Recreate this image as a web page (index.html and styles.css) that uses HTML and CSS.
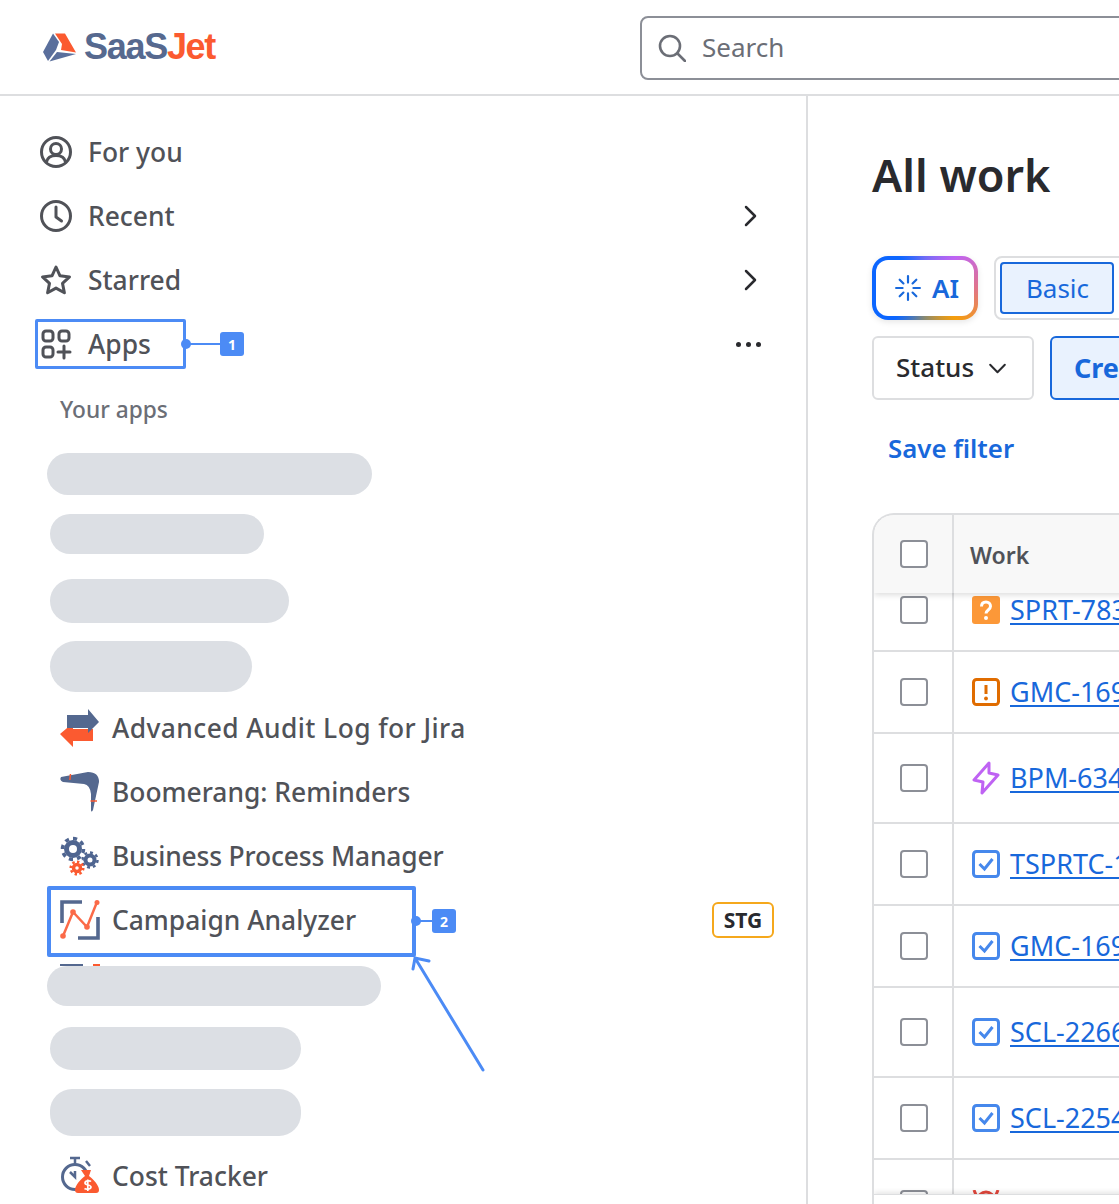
FILE: index.html
```html
<!DOCTYPE html>
<html lang="en">
<head>
<meta charset="utf-8">
<title>All work</title>
<link rel="stylesheet" href="styles.css">
</head>
<body>
<div class="page">
  <header class="topbar">
    <div class="logo">
      <svg class="logo-mark" viewBox="0 0 34 29"><path d="M10 .5 0 19l5 9 8-11 3-8z" fill="#5a6f9c"/><path d="M12 .5h10l11 19-15-2.500 1-6z" fill="#fb5a30"/><path d="M6.500 28.500 14 19l19 2z" fill="#5a6f9c"/></svg>
      <span class="logo-text">Saa<span class="logo-s">S</span><span class="logo-jet">Jet</span></span>
    </div>
    <div class="search">
      <svg class="search-icon" viewBox="0 0 28 28"><circle cx="12" cy="12" r="10" fill="none" stroke="#6b6e76" stroke-width="2.6"/><path d="M19.500 19.500 27 27" stroke="#6b6e76" stroke-width="2.6" stroke-linecap="round"/></svg>
      <span class="search-text">Search</span>
    </div>
  </header>
  <div class="columns">
    <nav class="sidebar">
      <a class="nav-item">
        <svg class="nav-icon" viewBox="0 0 32 32"><circle cx="16" cy="16" r="14.500" class="ln"/><circle cx="16" cy="13" r="5.500" class="ln"/><path d="M6.500 26c1-5 5-6.500 9.500-6.500S24.500 21 25.500 26" class="ln"/></svg>
        <span class="nav-label">For you</span>
      </a>
      <a class="nav-item">
        <svg class="nav-icon" viewBox="0 0 32 32"><circle cx="16" cy="16" r="14.500" class="ln"/><path d="M16 7v10l5.500 4" class="ln"/></svg>
        <span class="nav-label">Recent</span>
        <svg class="chev" viewBox="0 0 14 22"><path d="M2 2l9 9-9 9" class="ln-dark"/></svg>
      </a>
      <a class="nav-item">
        <svg class="nav-icon" viewBox="0 0 32 32"><path d="M16 3l4 8.800 9.500 1.100-7 6.500 1.900 9.400L16 24.100l-8.400 4.700 1.900-9.400-7-6.500 9.500-1.100z" class="ln"/></svg>
        <span class="nav-label">Starred</span>
        <svg class="chev" viewBox="0 0 14 22"><path d="M2 2l9 9-9 9" class="ln-dark"/></svg>
      </a>
      <a class="nav-item">
        <svg class="nav-icon" viewBox="0 0 32 32"><rect x="3" y="3" width="10" height="10" rx="3" class="ln"/><rect x="19" y="3" width="10" height="10" rx="3" class="ln"/><rect x="3" y="19" width="10" height="10" rx="3" class="ln"/><path d="M24 18v12M18 24h12" class="ln"/></svg>
        <span class="nav-label">Apps</span>
        <span class="more"><i></i><i></i><i></i></span>
      </a>
      <div class="section-title">Your apps</div>

      <div class="sk sk1"></div>
      <div class="sk sk2"></div>
      <div class="sk sk3"></div>
      <div class="sk sk4"></div>

      <a class="app-row app-first">
        <svg class="app-icon" viewBox="0 0 40 40"><path d="M0 26 13 15v6h20v12H13v6z" fill="#fb5a30"/><path d="M7 7h21V1l11 13-11 11v-5H7z" fill="#54688f"/></svg>
        <span class="app-label label-wide">Advanced Audit Log for Jira</span>
      </a>
      <a class="app-row">
        <svg class="app-icon" viewBox="0 0 40 40"><path d="M1 5 28 0q11 0 11 10l-6 28q-2 3-2 0V22q-1-9-7-10L3 10Q-1 8 1 5z" fill="#54688f"/><path d="M10.500 2l-.7 6" stroke="#fb5a30" stroke-width="1.500"/><path d="M30.500 29h6.500" stroke="#fb5a30" stroke-width="1.500"/></svg>
        <span class="app-label">Boomerang: Reminders</span>
      </a>
      <a class="app-row">
        <svg class="app-icon" viewBox="0 0 40 40">
          <circle cx="13" cy="13" r="6.500" class="gear" stroke-width="5"/>
          <circle cx="13" cy="13" r="10.500" class="gear teeth" pathLength="16" stroke-width="3.500"/>
          <circle cx="30" cy="24" r="4.500" class="gear" stroke-width="4"/>
          <circle cx="30" cy="24" r="7.500" class="gear teeth" pathLength="16" stroke-width="2.500"/>
          <circle cx="17" cy="32" r="3.500" class="gear-red" stroke-width="3.500"/>
          <circle cx="17" cy="32" r="6.300" class="gear-red teeth" pathLength="16" stroke-width="2.500"/>
        </svg>
        <span class="app-label label-tight">Business Process Manager</span>
      </a>
      <a class="app-row">
        <svg class="app-icon" viewBox="0 0 40 40"><path d="M22 2H2v21" fill="none" stroke="#54688f" stroke-width="3.600"/><path d="M38 17v21H18" fill="none" stroke="#54688f" stroke-width="3.600"/><path d="M3 36 13 12l14 15L37 2" fill="none" stroke="#fb6a48" stroke-width="2.500"/><circle cx="3" cy="36" r="2.800" fill="#fb6a48"/><circle cx="13" cy="12" r="2.800" fill="#fb6a48"/><circle cx="27" cy="27" r="2.800" fill="#fb6a48"/><circle cx="37" cy="2.500" r="2.500" fill="#fb6a48"/></svg>
        <span class="app-label">Campaign Analyzer</span>
        <span class="stg">STG</span>
      </a>
      <div class="peek"><i class="peek-blue"></i><i class="peek-red"></i></div>
      <div class="sk sk5"></div>
      <div class="sk sk6"></div>
      <div class="sk sk7"></div>
      <a class="app-row app-last">
        <svg class="app-icon" viewBox="0 0 40 40"><circle cx="15" cy="21" r="12.500" fill="none" stroke="#54688f" stroke-width="3"/><path d="M10 2h10M15 2v6M26 5l4 5M15 15v6l-5-5" fill="none" stroke="#54688f" stroke-width="2.500"/><path d="M21 14h10l-2 6c4 3 10 9 10 14 0 2-1 3-3 3H18c-2 0-3-1-3-3 0-5 6-11 10-14z" fill="#fb5a30"/><path d="M31 25.500c-1-1-6-1-6 1.500s6 1.500 6 4-5 2.500-6.500 1.500M27.800 23.500v11.500" fill="none" stroke="#fff" stroke-width="1.700"/></svg>
        <span class="app-label">Cost Tracker</span>
      </a>
    </nav>

    <main class="main">
      <h1 class="title">All work</h1>
      <div class="tools">
        <div class="ai-btn">
          <div class="ai-inner">
            <svg class="ai-icon" viewBox="0 0 24 24"><path d="M12 1v6M12 17v6M1 12h6M17 12h6M4.300 4.300l3.500 3.500M16.200 16.200l3.500 3.500M19.700 4.300l-3.500 3.500M7.800 16.200l-3.500 3.500" stroke="#1868db" stroke-width="2" stroke-linecap="round"/></svg>
            <span>AI</span>
          </div>
        </div>
        <div class="mode">
          <div class="mode-btn">Basic</div>
          <div class="mode-off">JQL</div>
        </div>
      </div>
      <div class="tools filter-row">
        <div class="status-btn">
          <span>Status</span>
          <svg class="status-chev" viewBox="0 0 20 12"><path d="M2 2l8 8 8-8" class="ln-dark thin"/></svg>
        </div>
        <div class="created-btn">Created</div>
      </div>
      <a class="save">Save filter</a>

      <section class="table">
        <div class="thead">
          <div class="cell-check"><span class="box"></span></div>
          <div class="th-work">Work</div>
        </div>
        <div class="tbody">
          <div class="tbody-inner">
            <div class="row">
              <div class="cell-check"><span class="box"></span></div>
              <div class="cell-work">
                <svg class="type" viewBox="0 0 28 28"><rect width="28" height="28" rx="3" fill="#fc9838"/><path d="M9.500 10.500c0-3 2-4.500 4.500-4.500s4.500 1.700 4.500 4.300c0 3.700-4.500 3.700-4.500 7.200" fill="none" stroke="#fff" stroke-width="3"/><circle cx="14" cy="22" r="2" fill="#fff"/></svg>
                <a class="key">SPRT-7831</a>
              </div>
            </div>
            <div class="row">
              <div class="cell-check"><span class="box"></span></div>
              <div class="cell-work">
                <svg class="type" viewBox="0 0 28 28"><rect x="1.500" y="1.500" width="25" height="25" rx="3" fill="none" stroke="#e06c00" stroke-width="3"/><path d="M14 7v9" stroke="#e06c00" stroke-width="3"/><circle cx="14" cy="20.500" r="1.900" fill="#e06c00"/></svg>
                <a class="key">GMC-1695</a>
              </div>
            </div>
            <div class="row row-tall">
              <div class="cell-check"><span class="box"></span></div>
              <div class="cell-work">
                <svg class="type tall-icon" viewBox="0 0 28 34"><path d="M17 2 2 19l9 2-1 11 16-18-9-2z" fill="none" stroke="#bf63f3" stroke-width="3" stroke-linejoin="round"/></svg>
                <a class="key">BPM-6342</a>
              </div>
            </div>
            <div class="row">
              <div class="cell-check"><span class="box"></span></div>
              <div class="cell-work">
                <svg class="type" viewBox="0 0 28 28"><rect x="1.500" y="1.500" width="25" height="25" rx="3" fill="none" stroke="#4688ec" stroke-width="3"/><path d="M7.500 14l5 5 8-10" fill="none" stroke="#4688ec" stroke-width="3"/></svg>
                <a class="key">TSPRTC-12</a>
              </div>
            </div>
            <div class="row">
              <div class="cell-check"><span class="box"></span></div>
              <div class="cell-work">
                <svg class="type" viewBox="0 0 28 28"><rect x="1.500" y="1.500" width="25" height="25" rx="3" fill="none" stroke="#4688ec" stroke-width="3"/><path d="M7.500 14l5 5 8-10" fill="none" stroke="#4688ec" stroke-width="3"/></svg>
                <a class="key">GMC-1694</a>
              </div>
            </div>
            <div class="row row-tall">
              <div class="cell-check"><span class="box"></span></div>
              <div class="cell-work">
                <svg class="type" viewBox="0 0 28 28"><rect x="1.500" y="1.500" width="25" height="25" rx="3" fill="none" stroke="#4688ec" stroke-width="3"/><path d="M7.500 14l5 5 8-10" fill="none" stroke="#4688ec" stroke-width="3"/></svg>
                <a class="key">SCL-2266</a>
              </div>
            </div>
            <div class="row">
              <div class="cell-check"><span class="box"></span></div>
              <div class="cell-work">
                <svg class="type" viewBox="0 0 28 28"><rect x="1.500" y="1.500" width="25" height="25" rx="3" fill="none" stroke="#4688ec" stroke-width="3"/><path d="M7.500 14l5 5 8-10" fill="none" stroke="#4688ec" stroke-width="3"/></svg>
                <a class="key">SCL-2254</a>
              </div>
            </div>
            <div class="row row-tall">
              <div class="cell-check"><span class="box"></span></div>
              <div class="cell-work">
                <svg class="type" viewBox="0 0 28 28"><circle cx="14" cy="10" r="8" fill="none" stroke="#e2483d" stroke-width="3"/><path d="M2 0l2 5M26 0l-2 5" stroke="#e2483d" stroke-width="3"/></svg>
                <a class="key">SCL-2250</a>
              </div>
            </div>
          </div>
        </div>
        <div class="tfoot"></div>
      </section>
    </main>
  </div>

  <div class="mark mark-apps"></div>
  <div class="mark mark-campaign"></div>
  <svg class="callouts" viewBox="0 0 1119 1204">
    <circle cx="186" cy="344" r="5" fill="#4c8bf5"/>
    <path d="M186 344h34" stroke="#4c8bf5" stroke-width="2"/>
    <circle cx="416" cy="921" r="5" fill="#4c8bf5"/>
    <path d="M416 921h16" stroke="#4c8bf5" stroke-width="2"/>
    <path d="M483 1070 415 958M413 969l2-11 14 3" fill="none" stroke="#4c8bf5" stroke-width="3" stroke-linecap="round"/>
  </svg>
  <div class="tag tag-1">1</div>
  <div class="tag tag-2">2</div>
</div>
</body>
</html>
```

FILE: styles.css
```css
* { box-sizing: border-box; }
html, body { margin: 0; padding: 0; background: #fff; }
body { font-family: "Noto Sans", "Open Sans", sans-serif; color: #292a2e; }
.page { position: relative; width: 1119px; height: 1204px; overflow: hidden; }
a { text-decoration: none; color: inherit; }
.ln { fill: none; stroke: #505258; stroke-width: 3; stroke-linecap: round; stroke-linejoin: round; }
.ln-dark { fill: none; stroke: #292a2e; stroke-width: 2.5; stroke-linecap: round; stroke-linejoin: round; }
.thin { stroke-width: 2.2; }
.gear { fill: none; stroke: #4f6590; }
.gear-red { fill: none; stroke: #fb5a30; }
.teeth { stroke-dasharray: 1 1; }

.topbar { height: 96px; display: flex; align-items: center; border-bottom: 2px solid #dddee0; padding-left: 43px; padding-top: 2px; }
.logo { display: flex; align-items: center; width: 597px; flex: none; gap: 7px; padding-bottom: 2px; }
.logo-mark { width: 34px; height: 29px; }
.logo-text { font-family: "Liberation Sans", Arial, sans-serif; font-weight: 700; font-size: 36px; letter-spacing: -1.3px; color: #56698f; line-height: 1; }
.logo-s { color: #56698f; }
.logo-jet { color: #fb5a30; }
.search { width: 700px; flex: none; height: 64px; border: 2px solid #8c8f97; border-radius: 8px; display: flex; align-items: center; padding-left: 16px; gap: 16px; font-size: 26px; color: #6b6e76; }
.search-icon { width: 28px; height: 28px; }
.search-text { padding-bottom: 2px; }

.columns { display: flex; height: 1108px; }
.sidebar { width: 808px; flex: none; border-right: 2px solid #dddee0; padding: 24px 0 0 0; overflow: hidden; }
.nav-item { height: 64px; display: flex; align-items: center; padding-left: 40px; color: #505258; font-size: 26.4px; }
.nav-icon { width: 32px; height: 32px; flex: none; }
.nav-label { margin-left: 16px; font-weight: 500; flex: 1; }
.chev { width: 14px; height: 22px; margin-right: 48px; flex: none; }
.more { display: flex; gap: 5px; margin-right: 45px; }
.more i { width: 5px; height: 5px; border-radius: 50%; background: #292a2e; display: block; }
.section-title { margin: 16px 0 0 60px; height: 36px; line-height: 36px; font-size: 22.7px; font-weight: 500; color: #6b6e76; }

.sk { background: #dcdfe4; border-radius: 22px; }
.sk1 { width: 325px; height: 42px; margin: 25px 0 0 47px; }
.sk2 { width: 214px; height: 40px; margin: 19px 0 0 50px; }
.sk3 { width: 239px; height: 44px; margin: 25px 0 0 50px; }
.sk4 { width: 202px; height: 51px; margin: 18px 0 0 50px; border-radius: 26px; }
.sk5 { width: 334px; height: 40px; margin: 0 0 0 47px; }
.sk6 { width: 251px; height: 43px; margin: 21px 0 0 50px; }
.sk7 { width: 251px; height: 47px; margin: 19px 0 0 50px; }

.app-row { height: 64px; display: flex; align-items: center; padding-left: 60px; font-size: 26.4px; color: #505258; }
.app-first { margin-top: 4px; }
.app-last { margin-top: 8px; }
.app-icon { width: 40px; height: 40px; flex: none; overflow: visible; }
.app-label { margin-left: 12px; font-weight: 500; flex: 1; }
.label-wide { letter-spacing: 0.42px; }
.label-tight { letter-spacing: -0.15px; }
.stg { width: 62px; height: 36px; margin-right: 32px; border: 2px solid #f5a81c; border-radius: 6px; font-size: 21px; font-weight: 700; color: #292a2e; display: flex; align-items: center; justify-content: center; }
.peek { height: 2px; margin: 12px 0 0 60px; display: flex; }
.peek-blue { width: 23px; background: #54688f; display: block; }
.peek-red { width: 7px; margin-left: 10px; background: #fb5a30; display: block; }

.main { flex: 1; padding-left: 64px; min-width: 0; overflow: hidden; }
.title { margin: 50px 0 0; height: 60px; line-height: 58px; font-size: 45px; font-weight: 600; color: #292a2e; }
.tools { display: flex; margin-top: 50px; width: 700px; }
.filter-row { margin-top: 16px; }
.ai-btn { width: 106px; height: 64px; padding: 4px; border-radius: 16px; background: conic-gradient(#6f6cf5 0deg, #bf63f3 45deg, #e0748a 90deg, #f59e0b 135deg, #8a8a70 180deg, #0c66ff 225deg, #0c66ff 320deg, #6f6cf5 360deg); box-shadow: 0 2px 6px rgba(0,0,0,.1); }
.ai-inner { height: 100%; background: #fff; border-radius: 12px; display: flex; align-items: center; padding-left: 19px; gap: 11px; font-size: 26px; font-weight: 600; color: #1868db; }
.ai-icon { width: 26px; height: 26px; flex: none; }
.mode { margin-left: 16px; height: 64px; border: 2px solid #dddee0; border-radius: 8px; padding: 4px; display: flex; }
.mode-btn { width: 114px; height: 52px; padding-left: 1px; background: #e9f2fe; border: 2px solid #1868db; border-radius: 4px; color: #1868db; font-size: 26px; display: flex; align-items: center; justify-content: center; }
.mode-off { padding: 0 30px; font-size: 26px; line-height: 52px; color: #505258; }
.status-btn { width: 162px; height: 64px; border: 2px solid #dddee0; border-radius: 6px; display: flex; align-items: center; padding: 0 0 2px 22px; gap: 14px; font-size: 26px; font-weight: 500; color: #292a2e; }
.status-chev { width: 19px; height: 11px; margin-top: 2px; }
.created-btn { margin-left: 16px; height: 64px; padding: 0 24px 2px 22px; background: #e9f2fe; border: 2px solid #1868db; border-radius: 6px; color: #1868db; font-size: 27px; font-weight: 700; display: flex; align-items: center; }
.save { display: block; margin: 30px 0 0 16px; height: 38px; line-height: 36px; font-size: 25.8px; font-weight: 600; color: #1868db; }

.table { margin-top: 45px; width: 900px; height: 691px; border: 2px solid #dddee0; border-right: 0; border-bottom: 0; border-top-left-radius: 22px; overflow: hidden; }
.thead { height: 78px; display: flex; background: #f8f8f8; box-shadow: 0 2px 6px rgba(0,0,0,.14); position: relative; z-index: 1; }
.thead .cell-check { height: 78px; }
.th-work { padding-left: 16px; display: flex; align-items: center; font-size: 23px; font-weight: 600; color: #505258; padding-top: 2px; }
.cell-check { width: 80px; flex: none; border-right: 2px solid #dddee0; display: flex; align-items: center; padding-left: 26px; }
.box { width: 28px; height: 28px; display: block; border: 2px solid #8c8f97; border-radius: 4px; background: #fff; }
.tbody { height: 601px; overflow: hidden; }
.tbody-inner { margin-top: -23px; }
.row { height: 82px; display: flex; border-bottom: 2px solid #dddee0; }
.row-tall { height: 90px; }
.cell-work { display: flex; align-items: center; padding-left: 18px; gap: 10px; }
.type { width: 28px; height: 28px; flex: none; }
.tall-icon { height: 34px; }
.key { font-size: 27px; color: #1868db; text-decoration: underline; text-underline-offset: 3px; line-height: 34px; }
.tfoot { height: 12px; background: #fff; border-top: 1px solid #dddee0; box-shadow: 0 -2px 5px rgba(0,0,0,.1); position: relative; }

.mark { position: absolute; border: 3px solid #4c8bf5; border-radius: 2px; }
.mark-apps { left: 35px; top: 319px; width: 151px; height: 50px; }
.mark-campaign { left: 47px; top: 886px; width: 369px; height: 71px; border-width: 4px; }
.callouts { position: absolute; left: 0; top: 0; width: 1119px; height: 1204px; pointer-events: none; }
.tag { position: absolute; width: 24px; height: 24px; background: #4c8bf5; border-radius: 3px; color: #fff; font-size: 14px; font-weight: 700; display: flex; align-items: center; justify-content: center; }
.tag-1 { left: 220px; top: 332px; }
.tag-2 { left: 432px; top: 909px; }
```
